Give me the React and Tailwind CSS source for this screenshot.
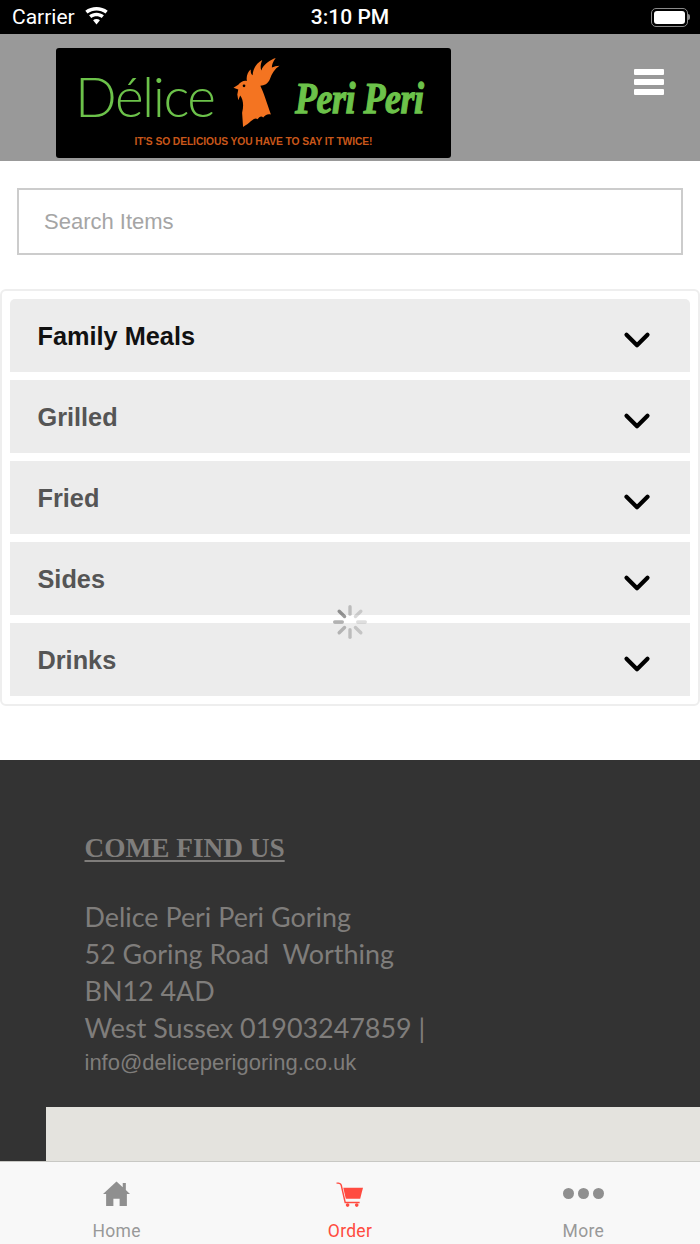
import React from 'react';
import { ChevronDown } from 'lucide-react';

const categories = [
    { name: 'Family Meals', color: 'text-[#111111]' },
    { name: 'Grilled', color: 'text-[#555555]' },
    { name: 'Fried', color: 'text-[#555555]' },
    { name: 'Sides', color: 'text-[#555555]' },
    { name: 'Drinks', color: 'text-[#555555]' },
];

const spokes = [
    { a: 0, o: 0.2 }, { a: 45, o: 0.15 }, { a: 90, o: 0.13 }, { a: 135, o: 0.17 },
    { a: 180, o: 0.2 }, { a: 225, o: 0.24 }, { a: 270, o: 0.3 }, { a: 315, o: 0.4 },
];

function Rooster() {
    return (
        <svg viewBox="0 0 52 74" className="w-[51px] h-[71px] shrink-0">
            <path fill="#f47421" d="M7 34 L2 32 L7 29 C9 26 13 24 16 25 C15 20 17 15 20 13 C20 16 20 18 22 19 C22 13 26 6 32 3 C30 8 30 11 31 14 C33 8 40 3 46 1 C43 5 42 8 42 11 C44 10 47 9 50 9 C45 12 42 17 40 23 C38 28 34 30 30 30 C33 36 37 48 41 60 C37 59 35 61 33 63 C31 61 29 62 27 65 C25 63 23 65 20 67 C18 69 15 71 12 73 L11 58 C13 50 12 44 9 40 L7 45 L6 39 Z" />
            <circle cx="13" cy="30" r="1.4" fill="#000000" />
        </svg>
    );
}

function Logo() {
    return (
        <div className="w-[395px] h-[110px] bg-black rounded-[3px] flex flex-col items-center">
            <div className="flex items-start h-[85px] pt-[9px] w-full">
                <span className="ml-[19px] w-[142px] mt-[7px] text-[55px] leading-[64px] font-light tracking-[-1.5px] text-[#6cc24a] font-['Lato',sans-serif]">Délice</span>
                <div className="ml-[14px]"><Rooster /></div>
                <span className="inline-block scale-y-125 ml-[13px] mt-[18px] text-[36px] leading-[46px] font-bold italic tracking-[-0.5px] whitespace-nowrap text-[#6cc24a] [-webkit-text-stroke:1px_#6cc24a] font-['Liberation_Serif',serif]">Peri Peri</span>
            </div>
            <span className="mt-[3px] text-[10.3px] leading-[12px] font-bold tracking-[-0.1px] text-[#c9571a] font-['Liberation_Sans',sans-serif]">IT'S SO DELICIOUS YOU HAVE TO SAY IT TWICE!</span>
        </div>
    );
}

function StatusBar() {
    return (
        <div className="h-[34px] bg-black text-white flex items-center relative shrink-0 font-['Roboto',sans-serif]">
            <span className="ml-3 text-[21px] leading-[34px]">Carrier</span>
            <svg viewBox="0 0 24 18" className="ml-[9px] mb-[2px] w-[25px] h-[18px]" fill="white">
                <path d="M12 17.5 L8.6 13.2 C10.5 11.6 13.5 11.6 15.4 13.2 Z" />
                <path d="M6.8 11 L4.6 8.3 C8.8 4.9 15.2 4.9 19.4 8.3 L17.2 11 C14.2 8.6 9.8 8.6 6.8 11 Z" />
                <path d="M3 6.4 L0.8 3.8 C7.2 -1.2 16.8 -1.2 23.2 3.8 L21 6.4 C15.8 2.4 8.2 2.4 3 6.4 Z" />
            </svg>
            <span className="absolute left-0 right-0 text-center text-[21px] leading-[34px] font-medium">3:10 PM</span>
            <div className="ml-auto mr-[10px] flex items-center">
                <div className="w-[37px] h-[19px] rounded-[5px] border border-[#8a8a8a] p-[2px]">
                    <div className="w-full h-full bg-white rounded-[3px]" />
                </div>
                <div className="w-[2px] h-[6px] bg-[#8a8a8a] rounded-r-sm" />
            </div>
        </div>
    );
}

function Spinner() {
    return (
        <svg viewBox="0 0 34 34" className="absolute left-[333px] top-[605px] w-[34px] h-[34px]">
            {spokes.map(s => (
                <rect
                    key={s.a}
                    x="15.3"
                    y="0"
                    width="3.4"
                    height="11"
                    rx="1.7"
                    fill="#000000"
                    opacity={s.o}
                    transform={`rotate(${s.a} 17 17)`}
                />
            ))}
        </svg>
    );
}

function TabBar() {
    return (
        <div className="h-[83px] shrink-0 bg-[#f8f8f8] border-t border-[#c8c8c4] grid grid-cols-3 font-['Roboto',sans-serif] text-[17.5px] leading-[20px] tracking-[0.3px]">
            <div className="flex flex-col items-center pt-[19px] text-[#999999]">
                <svg viewBox="0 0 26 24" className="w-[27px] h-[25px]" fill="#8f8f8f">
                    <path d="M13 0.5 L19 6 L19 2 L22 2 L22 8.6 L26 12.5 L23 12.5 L23 24 L16 24 L16 17 L10 17 L10 24 L3 24 L3 12.5 L0 12.5 Z" />
                </svg>
                <span className="mt-[15px]">Home</span>
            </div>
            <div className="flex flex-col items-center pt-[20px] text-[#ff4b40]">
                <svg viewBox="0 0 28 26" className="w-[28px] h-[25px] mb-[14px]" fill="#ff4b40">
                    <path d="M0 0.5 C3 0.5 5 1 5.6 3 L9.6 20.5 L24 20.5 L24 22 L8.4 22 L4.2 3.6 C3.8 2 2 1.8 0 1.8 Z" />
                    <path d="M7 6 L27.5 6 L24.6 17.5 L9.6 17.5 Z" />
                    <circle cx="11.5" cy="24" r="1.9" />
                    <circle cx="21" cy="24" r="1.9" />
                </svg>
                <span>Order</span>
            </div>
            <div className="flex flex-col items-center pt-[19px] text-[#999999]">
                <div className="h-[25px] flex items-center gap-[4px]">
                    <div className="w-[11px] h-[11px] rounded-full bg-[#8f8f8f]" />
                    <div className="w-[11px] h-[11px] rounded-full bg-[#8f8f8f]" />
                    <div className="w-[11px] h-[11px] rounded-full bg-[#8f8f8f]" />
                </div>
                <span className="mt-[15px]">More</span>
            </div>
        </div>
    );
}

export default function App() {
    return (
        <div className="w-[700px] h-[1244px] relative overflow-hidden flex flex-col bg-white font-['Liberation_Sans',sans-serif]">
            <StatusBar />

            {/* Header */}
            <div className="h-[127px] bg-[#999999] shrink-0 flex items-start pt-[14px] pl-[56px]">
                <Logo />
                <div className="ml-[183px] mt-[21px] w-[30px] flex flex-col gap-[4px]">
                    <div className="h-[6px] bg-white rounded-[1px]" />
                    <div className="h-[6px] bg-white rounded-[1px]" />
                    <div className="h-[6px] bg-white rounded-[1px]" />
                </div>
            </div>

            <div className="flex-1 min-h-0 overflow-hidden">
                <div className="px-[17px] pt-[27px]">
                    <input
                        placeholder="Search Items"
                        className="w-full h-[67px] border-2 border-[#cccccc] pl-[25px] text-[22px] outline-none placeholder:text-[#a5a5a5]"
                    />
                </div>

                {/* Categories */}
                <div className="mt-[34px] h-[417px] border-2 border-[#eeeeee] rounded-[6px] px-[8px] pt-[8px] flex flex-col gap-[8px]">
                    {categories.map(c => (
                        <div key={c.name} className="h-[73px] shrink-0 bg-[#ececec] first:rounded-t-[5px] flex items-center justify-between pl-[27.5px] pr-[32px]">
                            <span className={`text-[25.3px] font-bold pt-[2px] ${c.color}`}>{c.name}</span>
                            <ChevronDown className="w-[42px] h-[42px] mt-[9px] text-black" strokeWidth={2.4} />
                        </div>
                    ))}
                </div>

                {/* Footer */}
                <div className="mt-[54px] h-[401px] bg-[#333333] flex flex-col">
                    <div className="pl-[84.5px] pt-[71px] text-[#7f7d7b] font-['Lato',sans-serif] text-[26.9px] leading-[37px]">
                        <h2 className="font-['Liberation_Serif',serif] font-bold text-[27.3px] leading-[34px] underline underline-offset-[3px] mb-[33px]">COME FIND US</h2>
                        <p>Delice Peri Peri Goring</p>
                        <p className="whitespace-pre">52 Goring Road  Worthing</p>
                        <p>BN12 4AD</p>
                        <p>West Sussex 01903247859 |</p>
                        <p className="font-['Liberation_Sans',sans-serif] text-[22px] leading-[34px]">info@deliceperigoring.co.uk</p>
                    </div>
                    <div className="mt-auto ml-[46px] h-[54px] bg-[#e4e3de]" />
                </div>
            </div>

            <TabBar />
            <Spinner />
        </div>
    );
}
